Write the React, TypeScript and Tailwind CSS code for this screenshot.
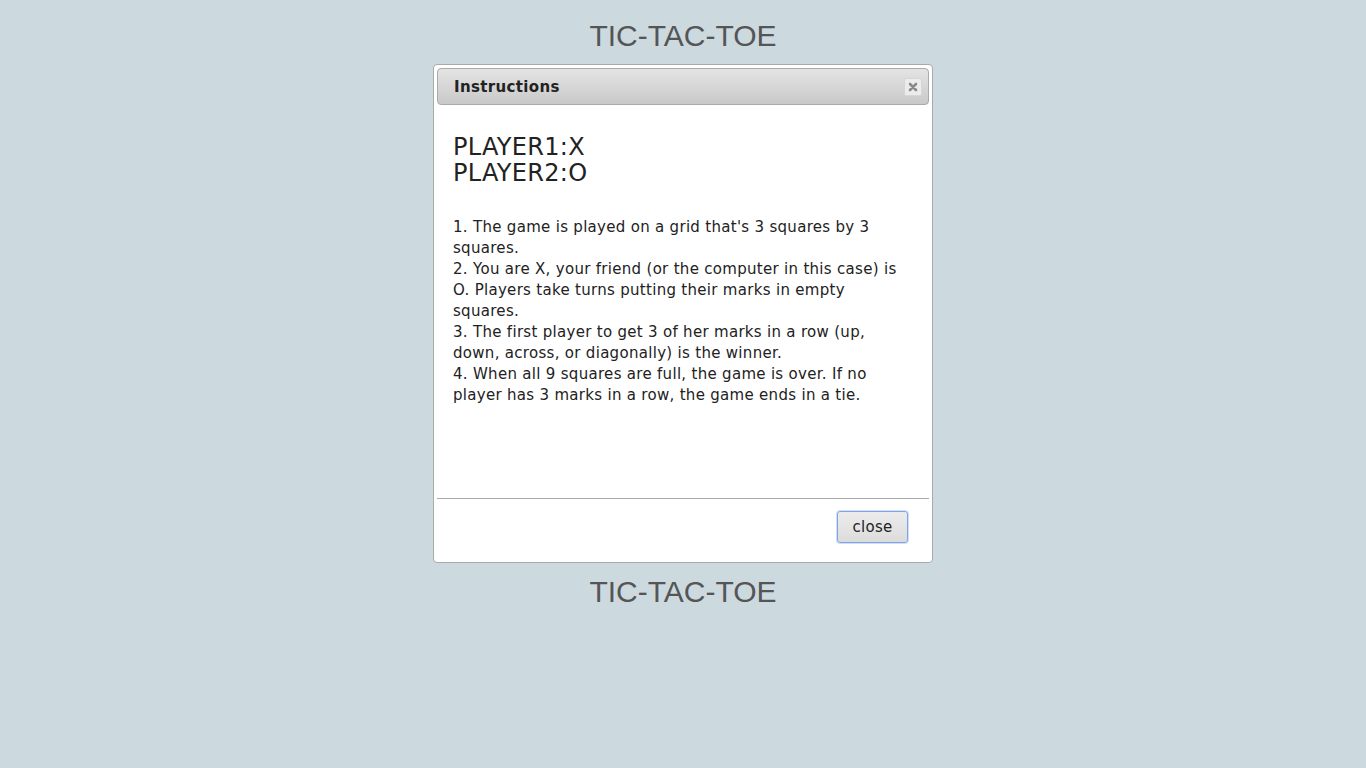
export default function App() {
  const rules = [
    "1. The game is played on a grid that's 3 squares by 3 squares.",
    "2. You are X, your friend (or the computer in this case) is O. Players take turns putting their marks in empty squares.",
    "3. The first player to get 3 of her marks in a row (up, down, across, or diagonally) is the winner.",
    "4. When all 9 squares are full, the game is over. If no player has 3 marks in a row, the game ends in a tie.",
  ];

  return (
    <div className="min-h-screen w-full bg-[#ccdae0] flex flex-col items-center pt-[19px]">
      <h1 className="text-[30px] leading-[34px] text-[#555555] font-['Liberation_Sans',Arial,sans-serif]">
        TIC-TAC-TOE
      </h1>

      {/* dialog */}
      <div className="mt-[11px] w-[500px] h-[499px] flex flex-col bg-white border border-[#aaaaaa] rounded-[4px] p-[3px] font-['DejaVu_Sans',Verdana,sans-serif] text-[#222222]">
        <div className="h-[37px] flex items-center justify-between pl-[16px] pr-[6px] pt-[1px] border border-[#aaaaaa] rounded-[4px] bg-gradient-to-b from-[#e4e4e4] to-[#c9c9c9]">
          <span className="text-[15px] font-bold tracking-[0.35px] text-[#222222]">Instructions</span>
          <button className="w-[18px] h-[18px] flex items-center justify-center bg-[#ececec] border border-[#d6d6d6] rounded-[2px]">
            <svg width="10" height="10" viewBox="0 0 10 10">
              <path d="M2 2 L8 8 M8 2 L2 8" stroke="#8a8a8a" strokeWidth="2.6" strokeLinecap="round" />
            </svg>
          </button>
        </div>

        <div className="flex-1 px-[16px] pt-[29px]">
          <div className="text-[24px] leading-[26px] tracking-[0.3px]">
            <div>PLAYER1:X</div>
            <div>PLAYER2:O</div>
          </div>
          <div className="mt-[31px] text-[15px] leading-[21px] tracking-[0.3px] pr-[2px]">
            {rules.map((r) => (
              <div key={r}>{r}</div>
            ))}
          </div>
        </div>

        <div className="h-[61px] border-t border-[#aaaaaa] flex justify-end items-start pr-[21px] pt-[12px]">
          <button className="w-[71px] h-[32px] pt-[1px] rounded-[3px] border border-[#7ea4e8] bg-gradient-to-b from-[#ececec] to-[#dcdcdc] text-[15px] tracking-[0.3px] text-[#222222] shadow-[0_0_0_1px_rgba(126,164,232,0.35)]">
            close
          </button>
        </div>
      </div>

      <h1 className="mt-[12px] text-[30px] leading-[34px] text-[#555555] font-['Liberation_Sans',Arial,sans-serif]">
        TIC-TAC-TOE
      </h1>
    </div>
  );
}
